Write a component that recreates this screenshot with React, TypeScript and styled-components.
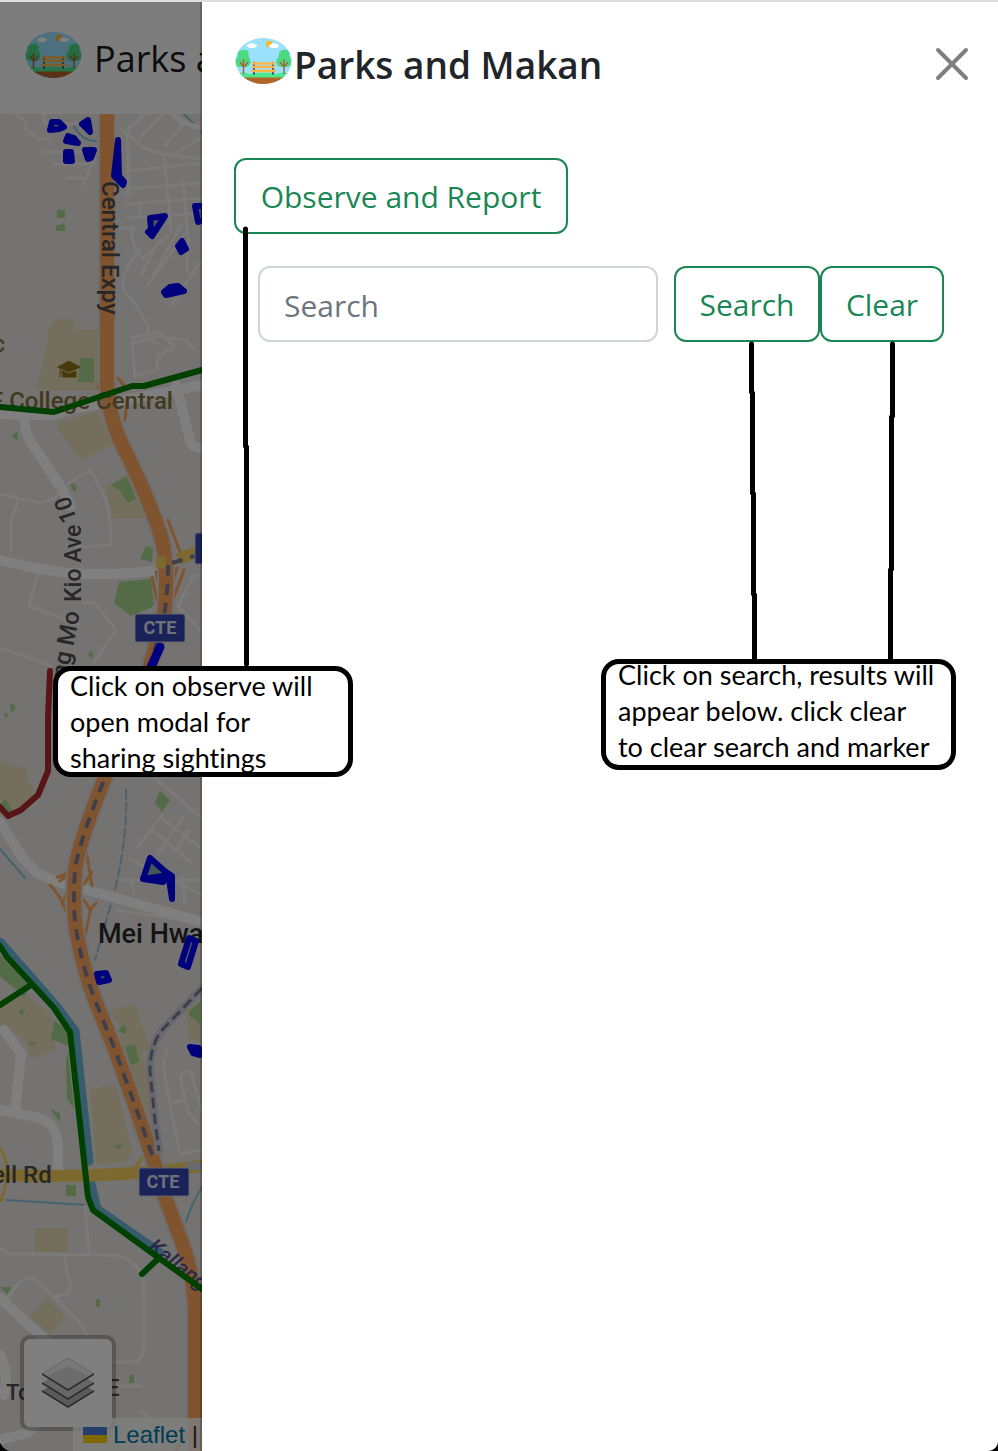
import React from "react";
import styled, { createGlobalStyle } from "styled-components";

const GlobalStyle = createGlobalStyle`
  *, *::before, *::after { box-sizing: border-box; }
  html, body { margin: 0; height: 100%; }
  #root { height: 100%; }
  body {
    background: #000;
    color: #212529;
    font-family: "Open Sans", "Noto Sans", sans-serif;
  }
`;

const Page = styled.div`
  position: relative;
  display: flex;
  flex-direction: column;
  min-height: 100vh;
  overflow: hidden;
  border-top: 2px solid #dedede;
  border-bottom-left-radius: 12px;
  border-bottom-right-radius: 10px;
`;

const Navbar = styled.nav`
  display: flex;
  align-items: center;
  height: 112px;
  padding: 2px 24px 0;
  background: #f8fbf9;
`;

const Brand = styled.a`
  display: flex;
  align-items: center;
  gap: 12px;
  color: #1a1b1d;
  font-size: 36px;
  line-height: 56px;
  white-space: nowrap;
  text-decoration: none;

  svg { margin-bottom: 8px; }
`;

const MapArea = styled.main`
  position: relative;
  flex: 1;
  display: flex;
  overflow: hidden;
  background: #eae6e2;
`;

const MapCanvas = styled.svg`
  position: absolute;
  inset: 0;
  width: 100%;
  height: 100%;
  font-family: Roboto, "Liberation Sans", sans-serif;
`;

const LayersButton = styled.button`
  position: absolute;
  left: 20px;
  bottom: 20px;
  display: grid;
  place-items: center;
  width: 96px;
  height: 96px;
  padding: 0;
  border: 4px solid rgba(0, 0, 0, 0.25);
  border-radius: 10px;
  background: #fff;
  background-clip: padding-box;
`;

const Attribution = styled.div`
  position: absolute;
  left: 73px;
  bottom: 0;
  display: flex;
  align-items: center;
  gap: 6px;
  height: 33px;
  padding: 0 10px;
  background: rgba(255, 255, 255, 0.8);
  color: #333;
  font: 24px/32px "Liberation Sans", sans-serif;
  white-space: nowrap;

  a { color: #0078a8; text-decoration: none; }
`;

const Backdrop = styled.div`
  position: absolute;
  inset: 0;
  background: rgba(0, 0, 0, 0.5);
`;

const Drawer = styled.aside`
  position: absolute;
  inset: 0 0 0 200px;
  border-left: 2px solid rgba(0, 0, 0, 0.2);
  background: #fff;
  background-clip: padding-box;
`;

const DrawerHeader = styled.header`
  display: flex;
  align-items: center;
  justify-content: space-between;
  height: 124px;
  padding: 0 28px 0 32px;
`;

const DrawerTitle = styled.h5`
  display: flex;
  align-items: center;
  gap: 2px;
  margin: 0;
  padding-top: 2px;
  font-size: 37px;
  font-weight: 600;
  line-height: 60px;
  white-space: nowrap;

  svg { margin-bottom: 8px; }
`;

const CloseButton = styled.button`
  display: grid;
  place-items: center;
  width: 36px;
  height: 36px;
  padding: 0;
  border: 0;
  background: none;
`;

const DrawerBody = styled.div`
  display: flex;
  flex-direction: column;
  align-items: flex-start;
  gap: 32px;
  padding: 32px;
`;

const OutlineButton = styled.button<{ $width: number }>`
  min-width: ${({ $width }) => $width}px;
  height: 76px;
  padding: 2px 20px 0;
  border: 2px solid #198754;
  border-radius: 12px;
  background: #fff;
  color: #198754;
  font: 30px/48px "Open Sans", "Noto Sans", sans-serif;
  white-space: nowrap;
`;

const SearchForm = styled.form`
  display: flex;
  padding-left: 24px;
`;

const SearchInput = styled.input`
  width: 400px;
  min-width: 0;
  height: 76px;
  margin-right: 16px;
  padding: 2px 24px 0;
  border: 2px solid #ced4da;
  border-radius: 12px;
  background: #fff;
  color: #212529;
  font: 30px/48px "Open Sans", "Noto Sans", sans-serif;

  &::placeholder { color: #6c757d; opacity: 1; }
`;

const Annotations = styled.div`
  position: absolute;
  inset: -2px 0 0;
  pointer-events: none;
`;

const Connectors = styled.svg`
  position: absolute;
  inset: 0;
  width: 100%;
  height: 100%;
`;

const Callout = styled.div<{ $x: number; $y: number; $width: number; $lift: number }>`
  position: absolute;
  left: ${({ $x }) => $x}px;
  top: ${({ $y }) => $y}px;
  display: flex;
  align-items: center;
  width: ${({ $width }) => $width}px;
  height: 111px;
  padding: 0 0 ${({ $lift }) => $lift}px 12px;
  border: 5px solid #000;
  border-radius: 18px;
  background: #fff;
`;

const CalloutText = styled.p`
  margin: 0;
  color: #000;
  font: 27px/36px Lato, "Open Sans", sans-serif;
  font-variant-ligatures: none;
  white-space: nowrap;
`;

function ParkLogo() {
  return (
    <svg width="58" height="48" viewBox="0 0 58 48" aria-hidden="true">
      <clipPath id="park-oval"><ellipse cx="29.500" cy="24" rx="28" ry="23" /></clipPath>
      <g clipPath="url(#park-oval)">
        <rect width="58" height="48" fill="#9be1fd" />
        <circle cx="35" cy="7" r="3.2" fill="#fdb62f" />
        <path d="M13 9q0-2 3-2q2-2 4 0q3 0 3 2q-1 2-5 2t-5-2ZM35 9q0-2 3-2q2-2 4 0q3 0 3 2q-1 2-5 2t-5-2Z" fill="#fff" />
        <path d="M0 37q8-3 16 0q13-3 26 0q8-3 16 0v6H0Z" fill="#4ce88c" />
        <path d="M0 40.500h58v8H0Z" fill="#b26428" />
        <path d="M9 13c5-1 7 3 5 6c4 3 3 11-2 11H6c-6 0-6-8-2-10c-1-4 1-7 5-7ZM50 13c5-1 7 3 5 6c4 3 3 11-2 11h-6c-6 0-6-8-2-10c-1-4 1-7 5-7Z" fill="#4cd982" />
        <path d="M9.500 22v15M14 25l-4 5M6 25l3 4M50 22v15M54 25l-4 5M46 25l3 4" fill="none" stroke="#a55f3b" strokeWidth="1.4" />
        <path d="M20 25v12.500M39 25v12.500" stroke="#35506a" strokeWidth="2" />
        <path d="M18 26.500h23M18 30h23M17 34h25" stroke="#fdb748" strokeWidth="2.400" />
      </g>
    </svg>
  );
}

function LayersIcon() {
  return (
    <svg width="54" height="54" viewBox="0 0 54 54" aria-hidden="true">
      <path d="M1 35 27 51 53 35 27 19Z" fill="#b4b4b4" />
      <path d="M1 35 27 51 53 35" fill="none" stroke="#5a5a5a" strokeWidth="1.500" />
      <path d="M1 27 27 43 53 27 27 11Z" fill="#ccc" />
      <path d="M1 27 27 43 53 27" fill="none" stroke="#5a5a5a" strokeWidth="1.500" />
      <path d="M1 18 27 2 53 18 27 34Z" fill="#f0f0f0" stroke="#ccc" strokeWidth="1" />
      <path d="M6 20 27 10 48 20 27 34Z" fill="#d8d8d8" />
      <path d="M1 18 27 34 53 18" fill="none" stroke="#5a5a5a" strokeWidth="1.500" />
    </svg>
  );
}

const EXPRESSWAY =
  "M107 110V384Q108 414 120 440Q152 505 162 540Q169 570 164 616L150 666L104 780Q78 845 75 870Q72 915 78 940Q83 968 95 1000L115 1050L133 1100L150 1150L166 1200L181 1240Q194 1275 195 1310V1451";

function StreetMap() {
  return (
    <MapCanvas role="img" aria-label="Street map">
      <g transform="translate(0 -114)" fill="none" strokeLinecap="round" strokeLinejoin="round">
        <g fill="#e9dfba">
          <path d="M55 319h19v11h24v60H35q9-24 14-62Z" />
          <path d="M54 423l43-11 18 32-35 16ZM105 486l22-12 19 44h-33Z" />
          <path d="M0 760l27 9v12l8 7-6 15-19 9-10-12ZM0 1008l24-15 28 22v22l-8 9-45-20ZM110 1010l26-6 14 45-16 4ZM90 1090l26-6 16 68-6 10-30 2ZM35 1228h33v24H34ZM48 1298l18 20-16 17-20-19ZM186 1010l16-8v40l-13-3Z" />
          <path d="M20 1030h35v20l-24 9ZM120 1035l16 5 22 60-18 30Z" />
        </g>
        <g fill="#a8d68e">
          <path d="M57 210h8v8h-8ZM56 226l8-3 2 8H56ZM80 358h14v24H78ZM13 434l5-2v8l-5-2ZM70 485l4-2 3 6-3 3ZM111 485l16-9 9 23-8 4-8-12ZM146 546l7 2-1 14-12-3Z" />
          <path d="M119 582l32-3 3 27-23 10-17-13ZM88 654l3-3 3 5-3 2ZM10 703l6 3-3 7-3-2ZM4 713l5 1-3 5ZM160 791l10 9-8 12-7-9ZM5 798l8 13-3 4-9-12Z" />
          <path d="M0 955l14 14 16 18-6 10-24-21ZM54 1020l14 12v14l-17-7ZM122 1025l4 2v7l-8-2ZM190 1010l10-8v22l-11-9ZM68 1052l6 56-7-9-1-38ZM125 1047l10-3 4 18-8 3ZM66 1185h10v11H66ZM50 1109l10 4v9ZM96 1299h4v8h-4ZM0 1287h12l-5 7ZM129 1376l5-2v9h-5ZM112 1146l10-2-2 5ZM18 1011l7-3-3 8ZM29 1041l8 2-6 3Z" />
        </g>
        <g stroke="#8bc4de" strokeWidth="2">
          <path d="M184 114l18 18M74 126q8 15 22 15" />
          <path d="M126 790q2 45-11 100l-20 70" strokeDasharray="9 4" stroke="#a1c1d7" />
          <path d="M0 849l25 29M6 1200l80 5M186 1222q4-15 16-35" />
        </g>
        <g stroke="#6ab9da" strokeWidth="9">
          <path d="M0 942l30 34 27 31 18 24 14 130M91 1184l6 25 49 34 14 10" />
        </g>
        <g stroke="#f7f5f2" strokeWidth="3">
          <path d="M16 114l10 8 0 8 13 9 10 0M44 114v8q20 4 41 0M43 152h48M55 164h40M66 178h20l8-20M83 185l6-14" />
          <path d="M121 129l23 19 18 6 40 5M145 114l-16 14M163 114l-24 24M185 121l-20 25M202 137l-32 20M128 130v65M127 171l75-8M128 189l74-6M127 204l75-6M128 218l75-5M164 155l7 74M183 181l6 68M140 202v12" />
          <path d="M120 228h15M131 229q1 20 12 29l11-10M154 274l27-49M141 275l15-30 12-9M147 286l40-55M187 249v22M171 305l31-45M141 250q-22 22-17 40l10 12 14 24v13l9 4M132 343l18-4 9-3 25 4 10 8M132 343l3 33 22-6 1-14 17-9-15-15-28 6" />
          <path d="M0 494l40 9 15-5 10-13 26-15 15 30q6 25 5 45l-25 2-19-2M18 501l-7 20v30M38 574l-9 32 50 19M82 603h13l21 27-22 32M0 648l52 18" />
          <path d="M202 575l-9 1-15 30 24 27M155 778l47 40M163 819l39 30M138 847l24-32M157 855l26-38M178 848l11-18M130 859l72 36M151 829l40 33M120 880h82M131 880l3 13M183 877l2 27M116 910l86 13" />
          <path d="M167 1050l-4 16 8 43 9 45 22-4M181 1080q-2-10 10-8l11 40M170 1103l16-3M180 1078l8 33 10 13M85 1206l4 47M0 1248l8 6 108 1q28 6 28 36v59q-2 12-12 12H54M65 1256l2 17 4 13-4 7-14 5M8 1298q17-29 30-16l16 15 28 28q8 18 15 33" />
          <path d="M118 1386h24M140 1411l24 16" />
        </g>
        <path d="M172 114q10 10 30 14" stroke="#faf9f8" strokeWidth="5" />
        <g stroke="#fff" strokeWidth="10">
          <path d="M0 414l52 1 30-8q56-9 120-22M24 419q2 20 13 32l25 38 9 17M176 385l14 55q3 9 12 8" />
          <path d="M0 560q56 14 96 14t60-4M0 822l22 35 14 15q21 12 48 17l118 33M0 1110l36 7q22 6 22 32v22M4 1030l17 24-6 58M0 1298l30 28 16 14M0 1440l27-7 16-14M0 1355q9 17 4 40" />
        </g>
        <g stroke="#ffa85f" strokeWidth="3">
          <path d="M101 350v24l-3 14M101 408l10 12M118 378l7 9M127 400l-2 20M154 520l3 26M168 520l12 32M164 530l8 24M152 577l8 38M156 572l8 30M184 570l-17 46M177 568l-12 40" />
          <path d="M57 877q12 0 18-22M60 881l8-6M50 885q13 12 21 42M66 894l-4 10M86 850l6 36M92 872l-8 12M84 900l6 10 6-7M91 908l-6 28" />
          <path d="M146 1120l14 40M160 1160l20 60M196 1418l-20 32M202 1400l-24 50M192 1318v60M202 1306h-8" />
        </g>
        <path d="M0 1175q110 4 202-9" stroke="#f8d35f" strokeWidth="12" />
        <path d="M0 1148q13 18 1 53M136 1166l8-10" stroke="#f8d35f" strokeWidth="3" />
        <path d={EXPRESSWAY} stroke="#dedbdc" strokeWidth="18" />
        <path d={EXPRESSWAY} stroke="#ffa85f" strokeWidth="14" />
        <path d="M156 562l10 1M178 559l24-9" stroke="#f8d35f" strokeWidth="12" strokeLinecap="butt" />
        <path d="M168 565Q168 590 164 616L150 666L104 780Q78 845 75 870Q72 915 78 940Q83 968 95 1000L115 1050L133 1100L155 1163M172 563l26-8" stroke="#7e7f99" strokeWidth="4" strokeDasharray="11 8" strokeLinecap="butt" />
        <path d="M202 988l-36 38q-16 15-16 45l5 50 4 30M190 1166h12" stroke="#d1d3dc" strokeWidth="8" />
        <path d="M202 988l-36 38q-16 15-16 45l5 50 4 30" stroke="#7b7c91" strokeWidth="3" strokeDasharray="11 5" strokeLinecap="butt" />
        <g fill="#4e4e50" fontSize="23" fontWeight="500">
          <text transform="translate(102 181) rotate(90)" fontSize="24">Central Expy</text>
          <text transform="translate(67 679) rotate(-79)" fontSize="24">ng Mo</text>
          <text transform="translate(81 602) rotate(-90)">Kio Ave</text>
          <text transform="translate(77 520) rotate(-108)">10</text>
          <text x="98" y="943" fontSize="27" fill="#28292b">Mei Hwa</text>
          <text x="-8" y="1183" fontSize="24">ell Rd</text>
          <text x="6" y="1400" fontSize="22">To</text>
          <text x="106" y="1396" fontSize="24">E</text>
          <text x="-10" y="409" fontSize="24" fill="#847440">F College Central</text>
          <text x="-7" y="352" fill="#847440">c</text>
          <text transform="translate(147 1249) rotate(38)" fill="#525591" fontSize="21" fontStyle="italic">Kallang</text>
        </g>
        <path d="M58 367l11-6 11 6-11 5ZM62 371l7 3 7-3v6h-13ZM60 369v8" fill="#8d7610" stroke="#8d7610" />
        <g stroke="#008000" strokeWidth="6">
          <path d="M0 407l54 5 78-26h12l58-16" />
          <path d="M0 946l7 11 24 26 23 25 16 24 18 165 5 13 66 48 43 31M31 985l-31 20M159 1258l-17 16" />
        </g>
        <path d="M50 671l-2 47v53l-10 24-17 15-13 6-8-9" stroke="#ae2a30" strokeWidth="6" />
        <g stroke="#0000ff" strokeWidth="6" fill="#8cb0ab">
          <path d="M52 122l-2 8 9-1 5-2-5-5ZM85 150l3 9 3-1 3-8ZM150 218l15-2-13 20-4-4 3-3ZM195 206l3 16 6-2v-14ZM150 858l-7 21 26-4ZM189 938l-8 26 7 3 8-26ZM97 974l2 8 10-2-3-7Z" />
          <path d="M190 1047l9 1 1 7-7-2Z" fill="#008000" />
        </g>
        <g stroke="#0000ff" strokeWidth="6" fill="#0000ff">
          <path d="M88 120l-6 4 8 8ZM68 136l-2 5 12 2-4-5ZM66 152v9h6l-1-9ZM118 140l-4 36 9 9 1-3-5-6ZM182 241l-4 5 3 6 5-3ZM164 292l6-5 8-1 6 5-18 4ZM143 879l20 3 6-7M166 872l6 4v23l-3-20Z" />
          <path d="M160 647l-9 20" strokeWidth="9" />
        </g>
        <path d="M137 616h46v24h-46ZM141 1170h46v24h-46ZM197 535h8v27h-8Z" stroke="#c9c9dc" strokeWidth="5" />
        <path d="M137 616h46v24h-46ZM141 1170h46v24h-46ZM197 535h8v27h-8Z" fill="#3346b2" stroke="#3346b2" strokeWidth="3" />
        <g fill="#e0e2ee" fontSize="18" fontWeight="700" textAnchor="middle">
          <text x="160" y="634">CTE</text>
          <text x="163" y="1188">CTE</text>
        </g>
      </g>
    </MapCanvas>
  );
}

export default function App() {
  return (
    <Page>
      <GlobalStyle />
      <Navbar>
        <Brand href="#"><ParkLogo />Parks and Makan</Brand>
      </Navbar>
      <MapArea>
        <StreetMap />
        <LayersButton type="button" aria-label="Layers"><LayersIcon /></LayersButton>
        <Attribution>
          <svg width="24" height="16" aria-hidden="true">
            <path d="M0 0h24v8H0Z" fill="#4c7be1" />
            <path d="M0 8h24v8H0Z" fill="#ffd500" />
          </svg>
          <span><a href="#">Leaflet</a> |</span>
        </Attribution>
      </MapArea>
      <Backdrop />
      <Drawer>
        <DrawerHeader>
          <DrawerTitle><ParkLogo />Parks and Makan</DrawerTitle>
          <CloseButton type="button" aria-label="Close">
            <svg width="36" height="36" viewBox="0 0 36 36" aria-hidden="true">
              <path d="M4 4 32 32M32 4 4 32" stroke="#7f7f7f" strokeWidth="4" strokeLinecap="round" />
            </svg>
          </CloseButton>
        </DrawerHeader>
        <DrawerBody>
          <OutlineButton type="button" $width={334}>Observe and Report</OutlineButton>
          <SearchForm onSubmit={(e) => e.preventDefault()}>
            <SearchInput type="search" placeholder="Search" aria-label="Search" />
            <OutlineButton type="submit" $width={146}>Search</OutlineButton>
            <OutlineButton type="reset" $width={124}>Clear</OutlineButton>
          </SearchForm>
        </DrawerBody>
      </Drawer>
      <Annotations>
        <Connectors aria-hidden="true">
          <path
            d="M245.500 229V446L246.500 447V664M751.500 344V392L752.500 393V493L753.500 494V594L754.500 595V660M892.500 344V416L891.500 417V569L890.500 570V660"
            fill="none"
            stroke="#000"
            strokeWidth="5"
            strokeLinecap="round"
          />
        </Connectors>
        <Callout $x={53} $y={666} $width={300} $lift={0}>
          <CalloutText>Click on observe will<br />open modal for<br />sharing sightings</CalloutText>
        </Callout>
        <Callout $x={601} $y={659} $width={355} $lift={8}>
          <CalloutText>Click on search, results will<br />appear below. click clear<br />to clear search and marker</CalloutText>
        </Callout>
      </Annotations>
    </Page>
  );
}
